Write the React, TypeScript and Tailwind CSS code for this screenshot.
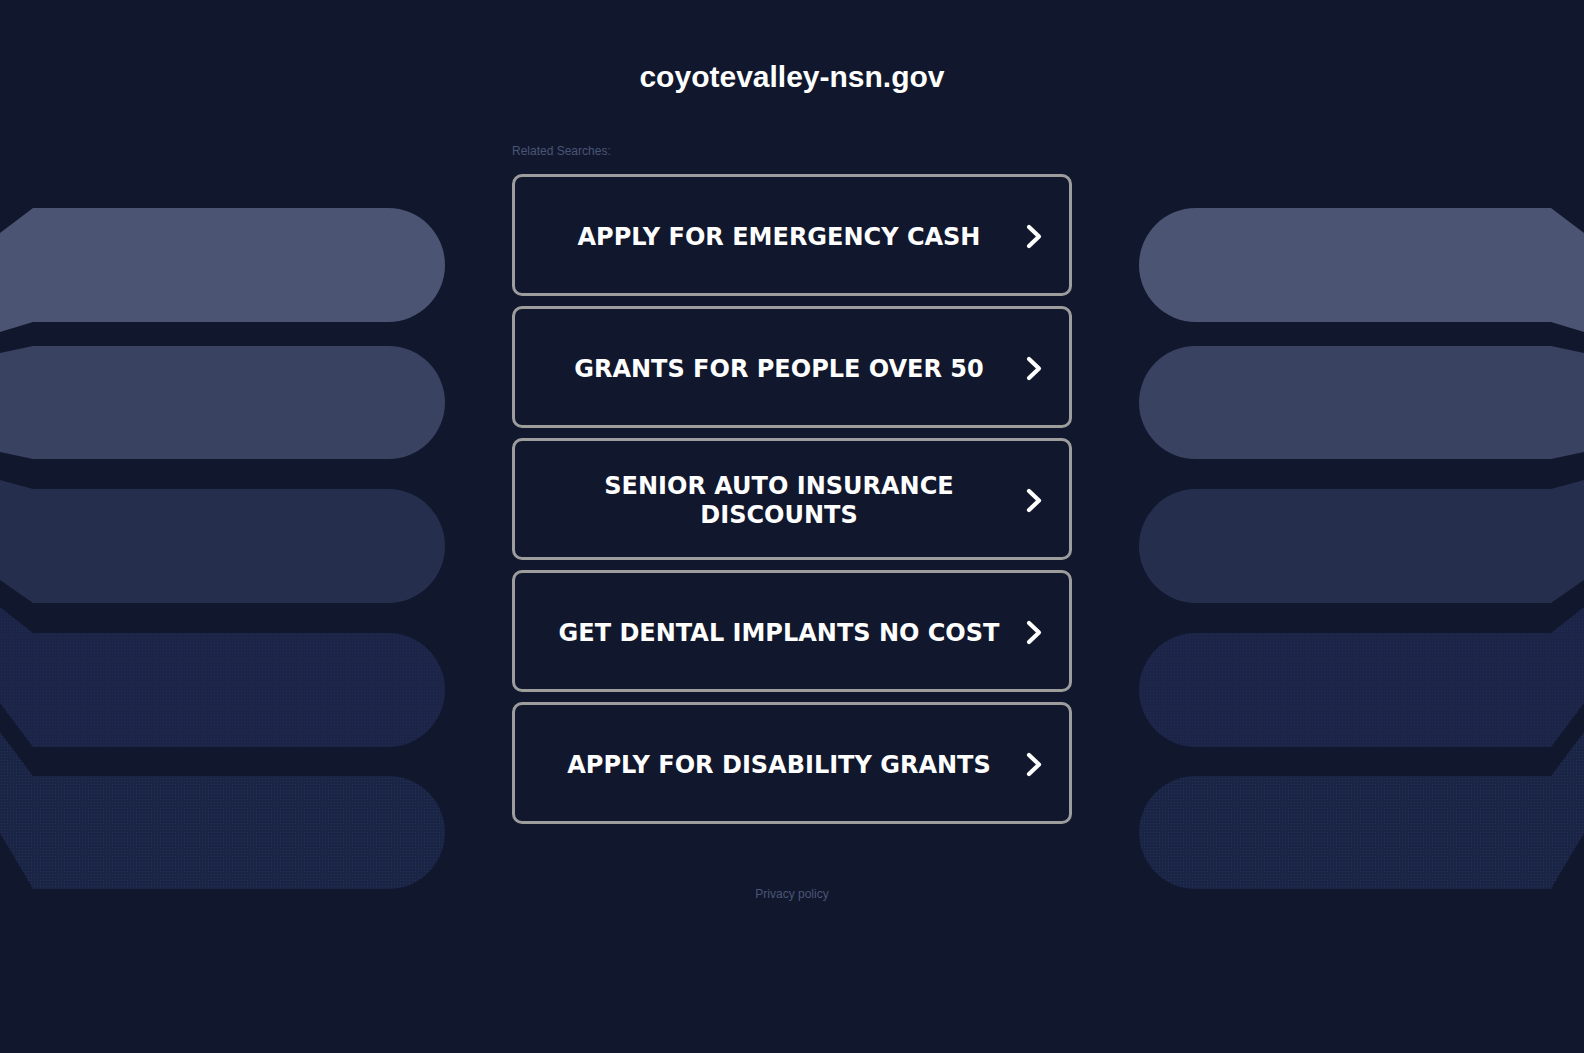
import { Fragment } from "react";

const searches = [
  "APPLY FOR EMERGENCY CASH",
  "GRANTS FOR PEOPLE OVER 50",
  "SENIOR AUTO INSURANCE DISCOUNTS",
  "GET DENTAL IMPLANTS NO COST",
  "APPLY FOR DISABILITY GRANTS",
];

// ribbons: top, bottom (at the bend), left-edge top, left-edge bottom, colour
const ribbons = [
  { t: 208, b: 322, lt: 233, lb: 332, fill: "#4b5573", dots: false },
  { t: 346, b: 459, lt: 353, lb: 452, fill: "#394261", dots: false },
  { t: 489, b: 603, lt: 480, lb: 580, fill: "#252f4d", dots: false },
  { t: 633, b: 747, lt: 607, lb: 703, fill: "#1c2547", dots: true },
  { t: 776, b: 889, lt: 732, lb: 833, fill: "#1a2444", dots: true },
];

const Ribbons = ({ id, flip }: { id: string; flip?: boolean }) => (
  <svg
    width="445"
    height="1053"
    viewBox="0 0 445 1053"
    className={flip ? "absolute top-0 right-0 -scale-x-100" : "absolute top-0 left-0"}
  >
    <defs>
      <pattern id={id} width="3" height="3" patternUnits="userSpaceOnUse">
        <rect x="1" y="1" width="1" height="1" fill="#2b3660" />
      </pattern>
    </defs>
    {ribbons.map((r, i) => {
      const rad = (r.b - r.t) / 2;
      const d = `M0 ${r.lt} L33 ${r.t} L${445 - rad} ${r.t} A${rad} ${rad} 0 0 1 ${445 - rad} ${r.b} L33 ${r.b} L0 ${r.lb} Z`;
      return (
        <Fragment key={i}>
          <path d={d} fill={r.fill} />
          {r.dots && <path d={d} fill={`url(#${id})`} opacity={i === 4 ? 0.7 : 0.45} />}
        </Fragment>
      );
    })}
  </svg>
);

const Chevron = () => (
  <svg width="18" height="27" viewBox="0 0 18 27" className="shrink-0 mt-[2px]">
    <polyline
      points="4,4 14,13.5 4,23"
      fill="none"
      stroke="#ffffff"
      strokeWidth="4.2"
      strokeLinecap="round"
      strokeLinejoin="round"
    />
  </svg>
);

export default function App() {
  return (
    <div className="relative min-h-screen h-[1053px] overflow-hidden bg-[#11182d]">
      <Ribbons id="dotsL" />
      <Ribbons id="dotsR" flip />

      <div className="relative mx-auto w-[560px] flex flex-col">
        <h1 className="pt-[59px] text-center text-[30px] leading-[36px] font-bold text-white font-['Liberation_Sans',Arial,sans-serif]">
          coyotevalley-nsn.gov
        </h1>

        <p className="mt-[48px] text-[12px] leading-[16px] text-[#4a5576] font-['Liberation_Sans',Arial,sans-serif]">
          Related Searches:
        </p>

        <div className="mt-[15px] flex flex-col gap-[10px]">
          {searches.map((s) => (
            <a
              key={s}
              href="#"
              className="flex h-[122px] items-center rounded-[10px] border-[3px] border-[#9d9d9d] bg-[#11182d] pl-[18px] pr-[26px]"
            >
              <span className="flex-1 pt-[4px] text-center text-[24px] leading-[29px] font-bold text-white font-['DejaVu_Sans',Verdana,sans-serif]">
                {s}
              </span>
              <Chevron />
            </a>
          ))}
        </div>

        <p className="mt-[62px] text-center text-[12px] leading-[16px] text-[#4a5576] font-['Liberation_Sans',Arial,sans-serif]">
          Privacy policy
        </p>
      </div>
    </div>
  );
}
